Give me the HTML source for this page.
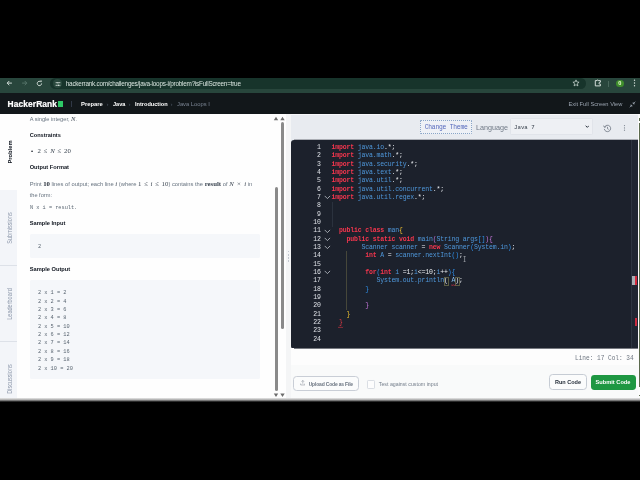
<!DOCTYPE html>
<html>
<head>
<meta charset="utf-8">
<title>HackerRank - Java Loops I</title>
<style>
html,body{margin:0;padding:0;width:640px;height:480px;overflow:hidden;background:#000;}
body{position:relative;font-family:"Liberation Sans",sans-serif;}
#wrap{position:absolute;left:0;top:0;width:640px;height:480px;will-change:transform;}
.abs{position:absolute;}
.t{position:absolute;white-space:pre;line-height:1;}
.mono{font-family:"Liberation Mono",monospace;}
.serif{font-family:"Liberation Serif",serif;}
#chrome{left:0;top:77.7px;width:640px;height:15.6px;background:#28463c;}
#urlpill{left:49.5px;top:78.4px;width:536px;height:10.4px;border-radius:5.2px;background:#17342b;}
#nav{left:0;top:93.2px;width:640px;height:20.8px;background:#12171a;}
#page{left:0;top:114px;width:640px;height:285px;background:#fefefe;overflow:hidden;}
#frameline{left:0;top:398.2px;width:640px;height:3.8px;background:linear-gradient(#e8e8e8 0%,#b4b4b4 40%,#555 75%,#000 100%);}
#sidebar{left:0;top:0;width:16.6px;height:285px;background:#f3f5f9;}
#sidebar .tab{position:absolute;left:0;width:16.6px;height:76px;border-bottom:0.6px solid #dde1e8;box-sizing:border-box;}
#sidebar .tab span{position:absolute;left:8.7px;top:50%;transform:translate(-50%,-50%) rotate(-90deg) scaleX(0.88);font-size:6.3px;color:#8d98ab;white-space:nowrap;}
#right{left:290.5px;top:0;width:347.2px;height:285px;background:#e8ebf0;}
#editor{left:0.5px;top:26px;width:346.7px;height:208.5px;background:#1c212c;border-radius:3px 0 0 3px;overflow:hidden;}
.ln{position:absolute;left:0;width:29.7px;text-align:right;color:#dde0e6;font-size:6.5px;letter-spacing:-0.15px;line-height:8.33px;height:8.33px;font-family:"Liberation Mono",monospace;}
.cl{position:absolute;left:40.4px;color:#e9ecf0;font-size:6.5px;letter-spacing:-0.15px;line-height:8.33px;height:8.33px;white-space:pre;font-family:"Liberation Mono",monospace;}
.k{color:#f6364e;font-weight:bold;}
.b{color:#4f98dc;}
.y{color:#f2c230;}
.p{color:#c678dd;}
.c{color:#2f8fe8;}
.r{color:#e63946;}
.bx{color:#e6e9ee;}
.mb{position:absolute;box-sizing:border-box;border:1px solid #5c5d44;}
.h{font-weight:bold;color:#0e141e;font-size:5.6px;}
.g{color:#66727f;font-size:5.65px;}
.btn{position:absolute;box-sizing:border-box;border-radius:3px;}
</style>
</head>
<body>
<div id="wrap">
<!-- browser toolbar -->
<div class="abs" id="chrome"></div>
<div class="abs" id="urlpill"></div>
<svg class="abs" style="left:5.9px;top:80.3px" width="7" height="6.2" viewBox="0 0 9 8"><path d="M7.6 4 H1.6 M4.2 1.3 L1.5 4 L4.2 6.7" fill="none" stroke="#e2ebe6" stroke-width="1.15"/></svg>
<svg class="abs" style="left:20.9px;top:80.3px" width="7" height="6.2" viewBox="0 0 9 8"><path d="M1.4 4 H7.4 M4.8 1.3 L7.5 4 L4.8 6.7" fill="none" stroke="#5b796f" stroke-width="1.15"/></svg>
<svg class="abs" style="left:35.7px;top:80px" width="7" height="7" viewBox="0 0 9 9"><path d="M7.2 4.4 A2.8 2.8 0 1 1 6.2 2.3" fill="none" stroke="#e2ebe6" stroke-width="1.15"/><path d="M5.2 0.8 H7.4 V3 Z" fill="#d6e2dc"/></svg>
<div class="abs" style="left:53.3px;top:79.4px;width:8.4px;height:8.4px;border-radius:50%;background:#29483d"></div>
<svg class="abs" style="left:54.5px;top:80.6px" width="6" height="6" viewBox="0 0 6 6"><path d="M0.6 1.7 H2.2 M3.6 1.7 H5.4 M0.6 4.3 H2.6 M4.2 4.3 H5.4" stroke="#dfe9e4" stroke-width="0.8" fill="none"/><circle cx="2.9" cy="1.7" r="0.8" fill="#dfe9e4"/><circle cx="3.4" cy="4.3" r="0.8" fill="#dfe9e4"/></svg>
<div class="t" style="left:65.8px;top:80.5px;font-size:6.4px;letter-spacing:-0.245px;color:#d9e4df">hackerrank.com/challenges/java-loops-i/problem?isFullScreen=true</div>
<!-- star -->
<svg class="abs" style="left:571.9px;top:79.3px" width="8" height="8" viewBox="0 0 8 8"><path d="M4 0.9 L4.9 3 L7.1 3.2 L5.4 4.7 L5.9 6.9 L4 5.7 L2.1 6.9 L2.6 4.7 L0.9 3.2 L3.1 3 Z" fill="none" stroke="#d6e2dc" stroke-width="0.7"/></svg>
<!-- extension -->
<svg class="abs" style="left:593.5px;top:79.3px" width="8" height="8" viewBox="0 0 8 8"><path d="M1.3 1.6 H3 A0.6 0.6 0 0 1 4.3 1.6 H6.4 V3.2 H6 A1 1 0 0 0 6 5.2 H6.4 V6.9 H1.3 Z" fill="none" stroke="#e2ebe6" stroke-width="0.9" stroke-linejoin="round"/></svg>
<div class="abs" style="left:608.3px;top:80.5px;width:0.5px;height:6px;background:#48665b"></div>
<div class="abs" style="left:616px;top:79.6px;width:7.6px;height:7.6px;border-radius:50%;background:#3f8e2c;box-sizing:border-box"></div>
<div class="t" style="left:618.25px;top:80.8px;font-size:5.6px;color:#eefcd8;font-weight:bold">0</div>
<svg class="abs" style="left:633.3px;top:79.3px" width="3" height="8" viewBox="0 0 3 8"><circle cx="1.5" cy="1.3" r="0.7" fill="#d6e2dc"/><circle cx="1.5" cy="4" r="0.7" fill="#d6e2dc"/><circle cx="1.5" cy="6.7" r="0.7" fill="#d6e2dc"/></svg>

<!-- site nav -->
<div class="abs" id="nav"></div>
<div class="t" style="left:7.6px;top:100.3px;font-size:8.4px;font-weight:bold;color:#fff;letter-spacing:0.1px;-webkit-text-stroke:0.22px #fff">HackerRank</div>
<div class="abs" style="left:57.8px;top:101.4px;width:4.9px;height:5.2px;background:#2ec866"></div>
<div class="abs" style="left:71.3px;top:101px;width:0.5px;height:6px;background:#303846"></div>
<div class="t" style="left:81px;top:101.9px;font-size:5.85px;font-weight:bold;color:#fff">Prepare</div>
<div class="t" style="left:106.5px;top:101.3px;font-size:6.2px;color:#4b5563">&#8250;</div>
<div class="t" style="left:113px;top:101.9px;font-size:5.6px;font-weight:bold;color:#fff">Java</div>
<div class="t" style="left:128.5px;top:101.3px;font-size:6.2px;color:#4b5563">&#8250;</div>
<div class="t" style="left:135px;top:101.9px;font-size:5.6px;font-weight:bold;color:#fff">Introduction</div>
<div class="t" style="left:170.5px;top:101.3px;font-size:6.2px;color:#4b5563">&#8250;</div>
<div class="t" style="left:177px;top:101.9px;font-size:5.8px;color:#7a8493">Java Loops I</div>
<div class="t" style="left:568.5px;top:102.2px;font-size:5.73px;color:#9aa3af">Exit Full Screen View</div>
<svg class="abs" style="left:629px;top:100.5px" width="7" height="7" viewBox="0 0 7 7"><path d="M6.3 0.7 L4.2 2.8 M4.2 1.2 V2.8 H5.8 M0.7 6.3 L2.8 4.2 M2.8 5.8 V4.2 H1.2" fill="none" stroke="#aab3c0" stroke-width="0.7"/></svg>

<!-- page -->
<div class="abs" id="page">
  <div class="abs" id="sidebar">
    <div class="tab" style="top:0;background:#fefefe;border-bottom:none"><span style="color:#0e141e;font-weight:bold;font-size:6.2px;transform:translate(-50%,-50%) rotate(-90deg) scaleX(0.93)">Problem</span></div>
    <div class="tab" style="top:76px;"><span>Submissions</span></div>
    <div class="tab" style="top:152px;"><span>Leaderboard</span></div>
    <div class="tab" style="top:228px;"><span style="top:36.7px">Discussions</span></div>
  </div>

  <!-- problem statement -->
  <div class="t g" style="left:29.7px;top:2.0px">A single integer, <i class="serif" style="font-size:6.6px;color:#3a4450">N</i>.</div>
  <div class="t h" style="left:29.7px;top:18.8px">Constraints</div>
  <div class="t" style="left:31px;top:34.4px;font-size:6px;color:#0e141e">&#8226;</div>
  <div class="t serif" style="left:37.5px;top:34.4px;font-size:6.8px;word-spacing:1.1px;color:#3a4450">2 &le; <i>N</i> &le; 20</div>
  <div class="t h" style="left:29.7px;top:50.7px;font-size:5.66px">Output Format</div>
  <div class="t g" style="left:29.7px;top:66.1px;font-size:5.78px;line-height:7px">Print <b class="serif" style="font-size:6.8px;color:#1c2530">10</b> lines of output; each line <i class="serif" style="font-size:6.8px;color:#3a4450">i</i> (where <span class="serif" style="font-size:6.8px;word-spacing:1.0px;color:#3a4450">1 &le; <i>i</i> &le; 10</span>) contains the <span class="serif" style="font-size:6.8px;color:#3a4450;font-weight:bold">result</span> of <span class="serif" style="font-size:6.8px;word-spacing:1.6px;color:#3a4450"><i>N</i> &times; <i>i</i></span> in</div>
  <div class="t g" style="left:29.7px;top:78.7px">the form:</div>
  <div class="t mono" style="left:30px;top:91.7px;font-size:5.25px;color:#5a6672">N x i = result.</div>
  <div class="t h" style="left:29.7px;top:107.1px;font-size:5.7px">Sample Input</div>
  <div class="abs" style="left:29.7px;top:120px;width:230.5px;height:23.7px;background:#f5f7fa;border-radius:1.5px"></div>
  <div class="t mono" style="left:37.9px;top:131.2px;font-size:5.3px;color:#5a6672">2</div>
  <div class="t h" style="left:29.7px;top:153.3px;font-size:5.7px">Sample Output</div>
  <div class="abs" style="left:29.7px;top:166px;width:230.5px;height:99.2px;background:#f5f7fa;border-radius:1.5px"></div>
  <div class="t mono" style="left:37.9px;top:177.20px;font-size:5.3px;color:#5a6672">2 x 1 = 2</div>
<div class="t mono" style="left:37.9px;top:185.58px;font-size:5.3px;color:#5a6672">2 x 2 = 4</div>
<div class="t mono" style="left:37.9px;top:193.96px;font-size:5.3px;color:#5a6672">2 x 3 = 6</div>
<div class="t mono" style="left:37.9px;top:202.34px;font-size:5.3px;color:#5a6672">2 x 4 = 8</div>
<div class="t mono" style="left:37.9px;top:210.72px;font-size:5.3px;color:#5a6672">2 x 5 = 10</div>
<div class="t mono" style="left:37.9px;top:219.10px;font-size:5.3px;color:#5a6672">2 x 6 = 12</div>
<div class="t mono" style="left:37.9px;top:227.48px;font-size:5.3px;color:#5a6672">2 x 7 = 14</div>
<div class="t mono" style="left:37.9px;top:235.86px;font-size:5.3px;color:#5a6672">2 x 8 = 16</div>
<div class="t mono" style="left:37.9px;top:244.24px;font-size:5.3px;color:#5a6672">2 x 9 = 18</div>
<div class="t mono" style="left:37.9px;top:252.62px;font-size:5.3px;color:#5a6672">2 x 10 = 20</div>

  <!-- left scrollbars -->
  <svg class="abs" style="left:273px;top:2px" width="13" height="5" viewBox="0 0 13 5"><path d="M0.8 4.2 L3 0.7 L5.2 4.2 Z M7.3 4.2 L9.5 0.7 L11.7 4.2 Z" fill="#6c6c6c"/></svg>
  <div class="abs" style="left:274.5px;top:73px;width:3.3px;height:204.3px;background:#8a8a8a;border-radius:1.5px"></div>
  <div class="abs" style="left:280.8px;top:8.2px;width:3.3px;height:207.2px;background:#8a8a8a;border-radius:1.7px"></div>
  <svg class="abs" style="left:273px;top:279.3px" width="13" height="5" viewBox="0 0 13 5"><path d="M0.8 0.6 L3 4.1 L5.2 0.6 Z M7.3 0.6 L9.5 4.1 L11.7 0.6 Z" fill="#6c6c6c"/></svg>
  <div class="abs" style="left:286px;top:0;width:4.5px;height:285px;background:#f4f5f6"></div>

  <div class="abs" style="left:287.6px;top:137px;width:1.2px;height:12px;background:repeating-linear-gradient(#c3c8d0 0 0.7px,transparent 0.7px 1.5px)"></div>
  <!-- right panel -->
  <div class="abs" id="right">
    <!-- toolbar -->
    <div class="btn" style="left:129.7px;top:6.1px;width:51.8px;height:13.7px;border:0.55px dotted #8aa6c8;border-radius:1px;background:#eef1f6"></div>
    <div class="t mono" style="left:134.2px;top:10.6px;font-size:6.3px;letter-spacing:-0.21px;color:#566abd">Change Theme</div>
    <div class="t" style="left:185.5px;top:9.9px;font-size:7.19px;color:#707986">Language</div>
    <div class="btn" style="left:219.3px;top:4.4px;width:83.4px;height:16.9px;border:0.5px solid #e1e4ea;border-radius:1.5px;background:#eef0f4"></div>
    <div class="t mono" style="left:223.6px;top:11.3px;font-size:5.7px;color:#39424e">Java 7</div>
    <svg class="abs" style="left:294.2px;top:10.9px" width="4.6" height="3.2" viewBox="0 0 6 4"><path d="M0.8 0.8 L3 3 L5.2 0.8" fill="none" stroke="#2c3440" stroke-width="1.3"/></svg>
    <svg class="abs" style="left:312px;top:9.6px" width="9" height="9" viewBox="0 0 9 9"><path d="M1.6 3 A3.2 3.2 0 1 1 1.3 4.9" fill="none" stroke="#5d6672" stroke-width="0.7"/><path d="M0.5 1.6 L1.5 3.4 L3.2 2.6" fill="none" stroke="#5d6672" stroke-width="0.7"/><path d="M4.5 2.9 V4.7 L5.7 5.4" fill="none" stroke="#5d6672" stroke-width="0.7"/></svg>
    <svg class="abs" style="left:332.8px;top:9.9px" width="3" height="8" viewBox="0 0 3 8"><circle cx="1.5" cy="1.6" r="0.6" fill="#7b838e"/><circle cx="1.5" cy="3.9" r="0.6" fill="#7b838e"/><circle cx="1.5" cy="6.2" r="0.6" fill="#7b838e"/></svg>

    <div class="abs" id="editor">
      <!-- indent guides -->
      <div class="abs" style="left:55px;top:111.22px;width:0.5px;height:58.81px;background:#46473a"></div>
      <div class="abs" style="left:41.2px;top:62.24px;width:0.4px;height:24.99px;background:#2b323e"></div>
      <div class="ln" style="top:3.93px">1</div>
<div class="cl" style="top:3.93px"><span class="k">import</span> <span class="b">java.io</span>.*;</div>
<div class="ln" style="top:12.27px">2</div>
<div class="cl" style="top:12.27px"><span class="k">import</span> <span class="b">java.math</span>.*;</div>
<div class="ln" style="top:20.59px">3</div>
<div class="cl" style="top:20.59px"><span class="k">import</span> <span class="b">java.security</span>.*;</div>
<div class="ln" style="top:28.93px">4</div>
<div class="cl" style="top:28.93px"><span class="k">import</span> <span class="b">java.text</span>.*;</div>
<div class="ln" style="top:37.26px">5</div>
<div class="cl" style="top:37.26px"><span class="k">import</span> <span class="b">java.util</span>.*;</div>
<div class="ln" style="top:45.59px">6</div>
<div class="cl" style="top:45.59px"><span class="k">import</span> <span class="b">java.util.concurrent</span>.*;</div>
<div class="ln" style="top:53.92px">7</div>
<div class="cl" style="top:53.92px"><span class="k">import</span> <span class="b">java.util.regex</span>.*;</div>
<svg class="abs" style="left:32.6px;top:55.32px" width="7" height="5" viewBox="0 0 7 5"><path d="M0.7 0.9 L3.4 3.6 L6.1 0.9" fill="none" stroke="#c9ced6" stroke-width="0.75"/></svg>
<div class="ln" style="top:62.24px">8</div>
<div class="ln" style="top:70.57px">9</div>
<div class="ln" style="top:78.90px">10</div>
<div class="ln" style="top:87.23px">11</div>
<div class="cl" style="top:87.23px">  <span class="k">public class</span> <span class="b">man</span><span class="y">{</span></div>
<svg class="abs" style="left:32.6px;top:88.63px" width="7" height="5" viewBox="0 0 7 5"><path d="M0.7 0.9 L3.4 3.6 L6.1 0.9" fill="none" stroke="#c9ced6" stroke-width="0.75"/></svg>
<div class="ln" style="top:95.56px">12</div>
<div class="cl" style="top:95.56px">    <span class="k">public static void</span> <span class="b">main</span><span class="p">(</span><span class="b">String args</span><span class="c">[]</span><span class="p">){</span></div>
<svg class="abs" style="left:32.6px;top:96.96px" width="7" height="5" viewBox="0 0 7 5"><path d="M0.7 0.9 L3.4 3.6 L6.1 0.9" fill="none" stroke="#c9ced6" stroke-width="0.75"/></svg>
<div class="ln" style="top:103.89px">13</div>
<div class="cl" style="top:103.89px">        <span class="b">Scanner scanner</span> = <span class="k">new</span> <span class="b">Scanner</span><span class="c">(</span><span class="b">System.in</span><span class="c">)</span>;</div>
<svg class="abs" style="left:32.6px;top:105.30px" width="7" height="5" viewBox="0 0 7 5"><path d="M0.7 0.9 L3.4 3.6 L6.1 0.9" fill="none" stroke="#c9ced6" stroke-width="0.75"/></svg>
<div class="ln" style="top:112.22px">14</div>
<div class="cl" style="top:112.22px">         <span class="k">int</span> <span class="b">A</span> = <span class="b">scanner.nextInt</span><span class="c">()</span>;</div>
<div class="ln" style="top:120.55px">15</div>
<div class="ln" style="top:128.89px">16</div>
<div class="cl" style="top:128.89px">         <span class="k">for</span><span class="c">(</span><span class="k">int</span> <span class="b">i</span> =1;<span class="b">i</span>&lt;=10;<span class="b">i</span>++<span class="c">){</span></div>
<svg class="abs" style="left:32.6px;top:130.29px" width="7" height="5" viewBox="0 0 7 5"><path d="M0.7 0.9 L3.4 3.6 L6.1 0.9" fill="none" stroke="#c9ced6" stroke-width="0.75"/></svg>
<div class="ln" style="top:137.22px">17</div>
<div class="cl" style="top:137.22px">            <span class="b">System.out.println</span><span class="bx">(</span> <span style="color:#86bff0">A</span><span class="bx">)</span>;</div>
<div class="ln" style="top:145.55px">18</div>
<div class="cl" style="top:145.55px">         <span class="c">}</span></div>
<div class="ln" style="top:153.88px">19</div>
<div class="ln" style="top:162.21px">20</div>
<div class="cl" style="top:162.21px">         <span class="p">}</span></div>
<div class="ln" style="top:170.53px">21</div>
<div class="cl" style="top:170.53px">    <span class="y">}</span></div>
<div class="ln" style="top:178.87px">22</div>
<div class="cl" style="top:178.87px">  <span class="r">}</span></div>
<div class="ln" style="top:187.19px">23</div>
<div class="ln" style="top:195.53px">24</div>
      <div class="mb" style="left:153px;top:137px;width:5px;height:9px"></div>
      <div class="mb" style="left:164px;top:137px;width:5px;height:9px"></div>
      <!-- text cursor -->
      <!-- red squiggle line 22 -->
      <svg class="abs" style="left:47px;top:186.43px" width="6" height="3" viewBox="0 0 6 3"><path d="M0 2 L1 0.8 L2 2 L3 0.8 L4 2 L5 0.8" fill="none" stroke="#e63946" stroke-width="0.5"/></svg>
      <svg class="abs" style="left:160.4px;top:143.58px" width="5" height="2.4" viewBox="0 0 5 2.4"><path d="M0 1.8 L0.9 0.6 L1.8 1.8 L2.7 0.6 L3.6 1.8 L4.5 0.6" fill="none" stroke="#e0364a" stroke-width="0.55"/></svg>
      <!-- mouse I-beam -->
      <svg class="abs" style="left:171.8px;top:116px" width="3.2" height="6.2" viewBox="0 0 4 8"><path d="M0.6 0.5 H3.4 M2 0.5 V7.5 M0.6 7.5 H3.4" fill="none" stroke="#c9cdd3" stroke-width="0.7"/></svg>
      <!-- overview ruler -->
      <div class="abs" style="left:340px;top:0;width:0.5px;height:208px;background:#2e3541"></div>
      <div class="abs" style="left:340.5px;top:0;width:6.2px;height:208px;background:#202632"></div>
      <div class="abs" style="left:341px;top:136.3px;width:2.6px;height:8.7px;background:#a9adb3"></div>
      <div class="abs" style="left:343.6px;top:136.3px;width:2.6px;height:8.7px;background:#d4283c"></div>
      <div class="abs" style="left:343.6px;top:178px;width:2.6px;height:8.3px;background:#c92a3e"></div>
    </div>

    <div class="abs" style="left:3px;top:25px;width:344px;height:1px;background:#abaeb5"></div>
    <div class="abs" style="left:0;top:0;width:347.2px;height:1px;background:#f6f7f9"></div>
    <!-- status band -->
    <div class="abs" style="left:0;top:234.4px;width:347.2px;height:16.9px;background:#fdfdfd"></div>
    <div class="abs" style="left:3px;top:234px;width:344px;height:1px;background:#767980"></div>
    <div class="t mono" style="left:284.3px;top:241.1px;font-size:7.1px;transform:scaleX(0.862);transform-origin:0 50%;color:#6f7782">Line: 17 Col: 34</div>
    <!-- bottom bar -->
    <div class="abs" style="left:0;top:251.3px;width:347.2px;height:34px;background:#f9fafa"></div>
    <div class="btn" style="left:2px;top:262.2px;width:66.3px;height:15.3px;background:#fbfcfc;border:0.6px solid #c9ced6;border-radius:3.6px"></div>
    <svg class="abs" style="left:9.4px;top:266.2px" width="5.6" height="5.6" viewBox="0 0 7 7"><path d="M3.5 0.6 V4.6 M1.9 2.2 L3.5 0.6 L5.1 2.2 M0.8 4.4 V6.2 H6.2 V4.4" fill="none" stroke="#737d8a" stroke-width="0.6"/></svg>
    <div class="t" style="left:18.2px;top:267.6px;font-size:5.0px;letter-spacing:-0.185px;font-weight:bold;color:#6a7480">Upload Code as File</div>
    <div class="btn" style="left:76.7px;top:266.4px;width:8.3px;height:8.3px;background:#fdfdfd;border:0.5px solid #dadee4;border-radius:1.2px"></div>
    <div class="t" style="left:88.3px;top:268.4px;font-size:5.25px;color:#737d8a">Test against custom input</div>
    <div class="btn" style="left:258.4px;top:260.3px;width:38px;height:15.4px;background:#fbfcfc;border:0.6px solid #c6ccd4;border-radius:3.6px"></div>
    <div class="t" style="left:264.5px;top:265.9px;font-size:5.51px;font-weight:bold;color:#1d2632">Run Code</div>
    <div class="btn" style="left:300.7px;top:260.5px;width:44.4px;height:15.3px;background:#1e9742;border-radius:3.4px"></div>
    <div class="t" style="left:305px;top:265.9px;font-size:5.68px;font-weight:bold;color:#fff">Submit Code</div>
  </div>
  <!-- page scrollbar strip -->
  <div class="abs" style="left:637.5px;top:0;width:2.5px;height:285px;background:#fcfcfc"></div>
  <div class="abs" style="left:639px;top:4px;width:1px;height:3px;background:#5b6a4e"></div>
  <div class="abs" style="left:639px;top:9px;width:1px;height:264px;background:#5b6a4e"></div>
  <div class="abs" style="left:639px;top:280.5px;width:1px;height:1.6px;background:#5b6a4e"></div>
</div>
<div class="abs" id="frameline"></div>
</div>
</body>
</html>
